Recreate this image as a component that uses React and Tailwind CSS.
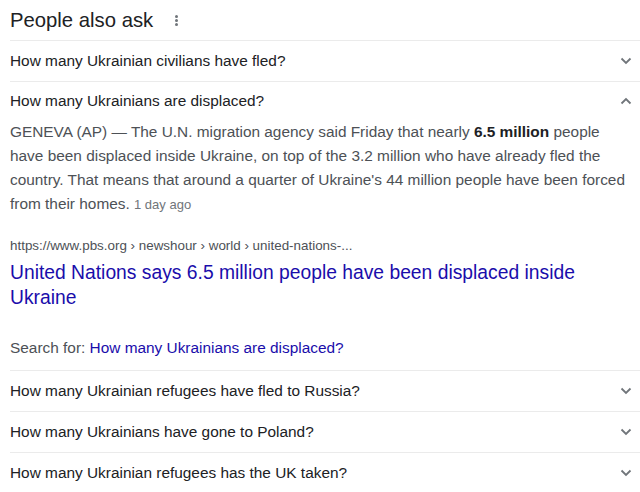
import React from "react";

const Chevron = ({ up }) => (
  <svg width="12" height="8" viewBox="0 0 12 8" className="shrink-0">
    <path
      d={up ? "M1.5 6.5 L6 2 L10.5 6.5" : "M1.5 1.5 L6 6 L10.5 1.5"}
      fill="none"
      stroke="#70757a"
      strokeWidth="1.8"
    />
  </svg>
);

const Question = ({ text, up, h = "h-10" }) => (
  <div className={`flex items-center justify-between pr-[8px] ${h}`}>
    <span className="text-[15.4px] text-[#202124]">{text}</span>
    <Chevron up={up} />
  </div>
);

const Divider = () => <div className="h-px bg-[#ebebeb]" />;

export default function App() {
  return (
    <div className="w-[640px] h-[492px] overflow-hidden bg-white pl-[10px] font-['Liberation_Sans',Arial,sans-serif]">
      <div className="flex items-center h-10">
        <span className="text-[20.3px] text-[#202124]">People also ask</span>
        <div className="flex flex-col gap-[1px] ml-[22px]">
          <span className="w-[3px] h-[3px] rounded-full bg-[#70757a]" />
          <span className="w-[3px] h-[3px] rounded-full bg-[#70757a]" />
          <span className="w-[3px] h-[3px] rounded-full bg-[#70757a]" />
        </div>
      </div>
      <Divider />
      <Question text="How many Ukrainian civilians have fled?" />
      <Divider />
      <Question text="How many Ukrainians are displaced?" up h="h-[38px]" />
      <p className="text-[15.4px] leading-[24px] text-[#4d5156] pr-[4px]">
        GENEVA (AP) — The U.N. migration agency said Friday that nearly{" "}
        <b className="text-[#202124]">6.5 million</b> people have been displaced inside Ukraine,
        on top of the 3.2 million who have already fled the country. That means that around a
        quarter of Ukraine's 44 million people have been forced from their homes.{" "}
        <span className="text-[13px] text-[#70757a]">1 day ago</span>
      </p>
      <div className="mt-[20px] text-[13.4px] leading-[18px] text-[#4d5156]">
        https://www.pbs.org › newshour › world › united-nations-...
      </div>
      <a className="block mt-[5px] text-[19.3px] leading-[25px] text-[#1a0dab] pr-[50px]">
        United Nations says 6.5 million people have been displaced inside Ukraine
      </a>
      <div className="mt-[28px] text-[15.4px] leading-[20px] text-[#4d5156]">
        Search for: <span className="text-[#1a0dab]">How many Ukrainians are displaced?</span>
      </div>
      <div className="mt-[12px]" />
      <Divider />
      <Question text="How many Ukrainian refugees have fled to Russia?" />
      <Divider />
      <Question text="How many Ukrainians have gone to Poland?" />
      <Divider />
      <Question text="How many Ukrainian refugees has the UK taken?" />
    </div>
  );
}
